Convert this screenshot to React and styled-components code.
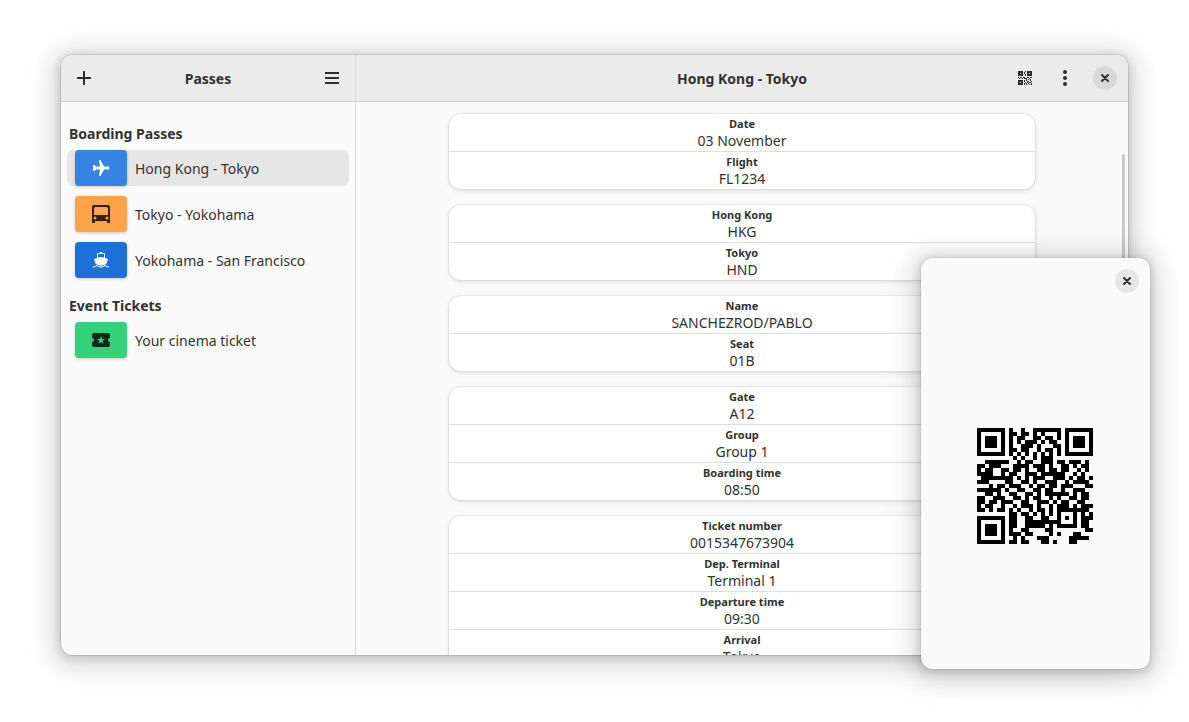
import React from "react";
import styled, { createGlobalStyle, css } from "styled-components";

const GlobalStyle = createGlobalStyle`
  *, *::before, *::after { box-sizing: border-box; }
  body {
    margin: 0;
    background: #fff;
    color: #323232;
    font-family: "Noto Sans", "Open Sans", sans-serif;
    font-size: 14px;
    line-height: 20px;
  }
`;

const Desktop = styled.div`
  min-height: 100vh;
  padding: 55px 61px 67px;
`;

const Window = styled.div`
  position: relative;
  height: calc(100vh - 122px);
  min-height: 440px;
`;

const Frame = styled.div`
  display: grid;
  grid-template-columns: 295px minmax(0, 1fr);
  height: 100%;
  overflow: hidden;
  border-radius: 12px;
  background: #fafafa;
`;

const Shadow = styled.div`
  height: 100%;
  border-radius: 12px;
  box-shadow: 0 0 0 1px rgba(0, 0, 0, 0.1), 0 2px 8px 2px rgba(0, 0, 0, 0.13),
    0 3px 20px 10px rgba(0, 0, 0, 0.09), 0 6px 32px 16px rgba(0, 0, 0, 0.04);
`;

const Pane = styled.section`
  display: flex;
  flex-direction: column;
  min-width: 0;
  min-height: 0;
  ${(p) => p.$divided && css`border-right: 1px solid #d9d9d9;`}
`;

const HeaderBar = styled.header`
  display: grid;
  grid-template-columns: 1fr auto 1fr;
  align-items: center;
  flex: none;
  height: 47px;
  padding: 0 6px;
  background: #ebebeb;
  border-bottom: 1px solid #d0d0d0;
`;

const HeaderSide = styled.div`
  display: flex;
  gap: 6px;
  justify-content: ${(p) => (p.$end ? "flex-end" : "flex-start")};
`;

const Title = styled.h1`
  margin: 0;
  padding-top: 2px;
  font-size: 14px;
  font-weight: 700;
`;

const IconButton = styled.button`
  display: grid;
  place-items: center;
  width: 34px;
  height: 34px;
  padding: 0;
  border: 0;
  border-radius: 6px;
  background: transparent;
  color: #2e2e2e;
`;

const CloseCircle = styled.span`
  display: grid;
  place-items: center;
  width: 24px;
  height: 24px;
  border-radius: 50%;
  background: ${(p) => (p.$light ? "#e6e6e6" : "#d8d8d8")};
`;

const PassNav = styled.nav`
  display: flex;
  flex-direction: column;
  gap: 18px;
  padding: 22px 6px;
`;

const GroupTitle = styled.h2`
  margin: 0 0 6px;
  padding: 0 2px;
  font-size: 14px;
  line-height: 20px;
  font-weight: 700;
`;

const PassList = styled.ul`
  display: flex;
  flex-direction: column;
  gap: 10px;
  margin: 0;
  padding: 0;
  list-style: none;
`;

const PassLink = styled.a`
  display: flex;
  align-items: center;
  gap: 8px;
  padding: 0 8px;
  border-radius: 6px;
  background: ${(p) => (p.$selected ? "#e6e6e6" : "transparent")};
  color: inherit;
  text-decoration: none;
`;

const PassName = styled.span`
  padding-top: 2px;
`;

const Tile = styled.span`
  display: grid;
  place-items: center;
  width: 52px;
  height: 36px;
  border-radius: 4px;
  background: ${(p) => p.$bg};
  color: ${(p) => p.$fg};
  box-shadow: 0 1px 3px rgba(0, 0, 0, 0.2);
`;

const Details = styled.main`
  position: relative;
  flex: 1;
  min-height: 0;
  overflow: hidden;
  padding: 12px;
`;

const Cards = styled.div`
  display: flex;
  flex-direction: column;
  gap: 16px;
  max-width: 586px;
  margin: 0 auto;
`;

const Card = styled.dl`
  flex: none;
  margin: 0;
  border-radius: 12px;
  background: #fff;
  box-shadow: 0 0 0 1px rgba(0, 0, 0, 0.04), 0 1px 3px 1px rgba(0, 0, 0, 0.07),
    0 2px 6px 2px rgba(0, 0, 0, 0.03);
`;

const Field = styled.div`
  padding: 2px 12px 1px;
  text-align: center;
  & + & { border-top: 1px solid #dedede; }
`;

const FieldName = styled.dt`
  font-size: 11px;
  line-height: 16px;
  font-weight: 700;
`;

const FieldValue = styled.dd`
  margin: 0;
  line-height: 18px;
`;

const ScrollThumb = styled.div`
  position: absolute;
  top: 52px;
  right: 3px;
  width: 3px;
  height: 300px;
  border-radius: 3px;
  background: #c9c9c9;
`;

const CodeDialog = styled.aside`
  position: absolute;
  right: -22px;
  bottom: -14px;
  display: flex;
  flex-direction: column;
  width: 229px;
  height: 411px;
  border-radius: 12px;
  background: #fafafa;
  box-shadow: 0 0 0 1px rgba(0, 0, 0, 0.05), 0 2px 8px 2px rgba(0, 0, 0, 0.13),
    0 3px 20px 10px rgba(0, 0, 0, 0.09), 0 6px 32px 16px rgba(0, 0, 0, 0.04);
`;

const DialogBar = styled.div`
  display: flex;
  justify-content: flex-end;
  padding: 6px;
`;

const DialogBody = styled.div`
  display: grid;
  place-items: center;
  flex: 1;
  padding: 0 1px 1px 0;
`;

const PlusIcon = () => (
  <svg width="16" height="16" viewBox="0 0 16 16" aria-hidden="true">
    <path d="M7 1h2v6h6v2H9v6H7V9H1V7h6z" fill="currentColor" />
  </svg>
);

const MenuIcon = () => (
  <svg width="16" height="16" viewBox="0 0 16 16" aria-hidden="true">
    <path d="M1 2h14v2H1zM1 7h14v2H1zM1 12h14v2H1z" fill="currentColor" />
  </svg>
);

const DotsIcon = () => (
  <svg width="16" height="16" viewBox="0 0 16 16" fill="currentColor" aria-hidden="true">
    <circle cx="8" cy="2" r="2" />
    <circle cx="8" cy="8" r="2" />
    <circle cx="8" cy="14" r="2" />
  </svg>
);

const CloseIcon = () => (
  <svg width="16" height="16" viewBox="0 0 16 16" aria-hidden="true">
    <path d="M5 5l6 6M11 5l-6 6" stroke="currentColor" strokeWidth="2" strokeLinecap="round" />
  </svg>
);

const SmallCodeIcon = () => (
  <svg width="16" height="16" viewBox="0 0 16 16" fill="currentColor" fillRule="evenodd" shapeRendering="crispEdges" aria-hidden="true">
    <path d="M1 1h5v5H1zM3 3v1h1V3zM10 1h5v5h-5zM12 3v1h1V3zM1 10h5v5H1zM3 12v1h1v-1z" />
    <path d="M8 1h1v1H8zM7 2h1v2H7zM8 4h1v2H8zM1 7h1v1H1zM3 7h2v1H3zM2 8h1v1H2zM5 8h1v1H5zM6 7h2v1H6zM7 8h2v1H7zM10 7h2v1h-2zM13 7h2v1h-2zM9 8h1v1H9zM12 8h1v1h-1zM7 10h1v2H7zM9 9h1v2H9zM10 11h2v1h-2zM11 9h1v1h-1zM13 9h1v2h-1zM8 12h1v1H8zM7 13h1v2H7zM9 13h1v2H9zM10 12h1v1h-1zM12 12h2v1h-2zM11 13h1v1h-1zM14 11h1v1h-1zM12 14h1v1h-1zM14 13h1v2h-1z" />
  </svg>
);

const PlaneIcon = () => (
  <svg width="18" height="18" viewBox="0 0 18 18" fill="currentColor" aria-hidden="true">
    <path d="M7 1h1.500L12 7.500h4q1.500 0 1.500 1.500T16 10.500h-4L8.500 17H7l1-6.500H4L2.500 12H1V6h1.500L4 7.500h4z" />
  </svg>
);

const BusIcon = () => (
  <svg width="18" height="18" viewBox="0 0 18 18" fill="currentColor" fillRule="evenodd" aria-hidden="true">
    <path d="M2 0h14q2 0 2 2v16h-3v-2H3v2H0V2q0-2 2-2zM3.500 2Q2 2 2 3.500V10h14V3.500Q16 2 14.500 2zM3 11.500a1.500 1.500 0 1 0 0 3 1.500 1.500 0 0 0 0-3zM15 11.500a1.500 1.500 0 1 0 0 3 1.500 1.500 0 0 0 0-3z" />
  </svg>
);

const BoatIcon = () => (
  <svg width="18" height="18" viewBox="0 0 18 18" fill="currentColor" fillRule="evenodd" aria-hidden="true">
    <path d="M8 1h2v1h2q1 0 1 1v4l3 1-1.500 4.500Q13 14 11.500 14q-1.500 0-2.500 1-1-1-2.500-1Q5 14 3.500 12.500L2 8l3-1V3q0-1 1-1h2zM6 3v3.500L9 6l3 .500V3z" />
    <path d="M1 16q2 0 4-1.500 2 1.500 4 1.500t4-1.500q2 1.500 4 1.500" fill="none" stroke="currentColor" />
  </svg>
);

const TicketIcon = () => (
  <svg width="18" height="14" viewBox="0 0 18 14" fill="currentColor" fillRule="evenodd" aria-hidden="true">
    <path d="M2 0h14q2 0 2 2v3q-2 0-2 2t2 2v3q0 2-2 2H2q-2 0-2-2V9q2 0 2-2T0 5V2q0-2 2-2zM9 2.800L8 6H4.800l2.600 1.800-1 3L9 9l2.600 1.800-1-3L13.200 6H10z" />
  </svg>
);

const CODE = [
  "11111110100100111111101111111",
  "10000010110110101000101000001",
  "10111010101100110110101011101",
  "10111010101011101011001011101",
  "10111010100111010001101011101",
  "10000010110110010110101000001",
  "11111110101010101010101111111",
  "00000000010100101110000000000",
  "00111111001011001110110111010",
  "11011100011110111010011010110",
  "10110011011010011011011001010",
  "11110010110011101111110010100",
  "01111111101010111001110101101",
  "11100001100110100111001011110",
  "00010110111001011011011100011",
  "11111101001100110110010011100",
  "00110100110011010111111010110",
  "11001110011010110010100110110",
  "11011011100110011101011001100",
  "10110010010111010010111010111",
  "11010110101001011010111111110",
  "00000000110110101010100010101",
  "11111110110011001100101010111",
  "10000010110011111111100010110",
  "10111010110011111010111110110",
  "10111010100110000110000000011",
  "10111010111011000010100011000",
  "10000010010100011100000111110",
  "11111110110110001101000110000",
];

const codePath = CODE.map((row, y) =>
  [...row].map((bit, x) => (bit === "1" ? `M${x} ${y}h1v1h-1z` : "")).join("")
).join("");

const PassCode = () => (
  <svg width="116" height="116" viewBox="0 0 29 29" shapeRendering="crispEdges" role="img" aria-label="Boarding pass code">
    <path d={codePath} fill="#000" />
  </svg>
);

const groups = [
  {
    title: "Boarding Passes",
    passes: [
      { name: "Hong Kong - Tokyo", bg: "#3584e4", fg: "#fff", Icon: PlaneIcon, selected: true },
      { name: "Tokyo - Yokohama", bg: "#ffa348", fg: "#33200e", Icon: BusIcon },
      { name: "Yokohama - San Francisco", bg: "#1c71d8", fg: "#fff", Icon: BoatIcon },
    ],
  },
  {
    title: "Event Tickets",
    passes: [{ name: "Your cinema ticket", bg: "#33d17a", fg: "#0a2a18", Icon: TicketIcon }],
  },
];

const cards = [
  [["Date", "03 November"], ["Flight", "FL1234"]],
  [["Hong Kong", "HKG"], ["Tokyo", "HND"]],
  [["Name", "SANCHEZROD/PABLO"], ["Seat", "01B"]],
  [["Gate", "A12"], ["Group", "Group 1"], ["Boarding time", "08:50"]],
  [["Ticket number", "0015347673904"], ["Dep. Terminal", "Terminal 1"], ["Departure time", "09:30"], ["Arrival", "Tokyo"]],
];

const CloseButton = ({ light, label }) => (
  <IconButton type="button" aria-label={label}>
    <CloseCircle $light={light}><CloseIcon /></CloseCircle>
  </IconButton>
);

export default function App() {
  return (
    <Desktop>
      <GlobalStyle />
      <Window>
        <Shadow>
          <Frame>
            <Pane $divided>
              <HeaderBar>
                <HeaderSide>
                  <IconButton type="button" aria-label="Add pass"><PlusIcon /></IconButton>
                </HeaderSide>
                <Title>Passes</Title>
                <HeaderSide $end>
                  <IconButton type="button" aria-label="Main menu"><MenuIcon /></IconButton>
                </HeaderSide>
              </HeaderBar>
              <PassNav>
                {groups.map((group) => (
                  <div key={group.title}>
                    <GroupTitle>{group.title}</GroupTitle>
                    <PassList>
                      {group.passes.map(({ name, bg, fg, Icon, selected }) => (
                        <li key={name}>
                          <PassLink href="#" $selected={selected}>
                            <Tile $bg={bg} $fg={fg}><Icon /></Tile>
                            <PassName>{name}</PassName>
                          </PassLink>
                        </li>
                      ))}
                    </PassList>
                  </div>
                ))}
              </PassNav>
            </Pane>
            <Pane>
              <HeaderBar>
                <HeaderSide />
                <Title as="h2">Hong Kong - Tokyo</Title>
                <HeaderSide $end>
                  <IconButton type="button" aria-label="Show code"><SmallCodeIcon /></IconButton>
                  <IconButton type="button" aria-label="More options"><DotsIcon /></IconButton>
                  <CloseButton label="Close window" />
                </HeaderSide>
              </HeaderBar>
              <Details>
                <Cards>
                  {cards.map((fields) => (
                    <Card key={fields[0][0]}>
                      {fields.map(([name, value]) => (
                        <Field key={name}>
                          <FieldName>{name}</FieldName>
                          <FieldValue>{value}</FieldValue>
                        </Field>
                      ))}
                    </Card>
                  ))}
                </Cards>
                <ScrollThumb />
              </Details>
            </Pane>
          </Frame>
        </Shadow>
        <CodeDialog>
          <DialogBar><CloseButton light label="Close code" /></DialogBar>
          <DialogBody><PassCode /></DialogBody>
        </CodeDialog>
      </Window>
    </Desktop>
  );
}
